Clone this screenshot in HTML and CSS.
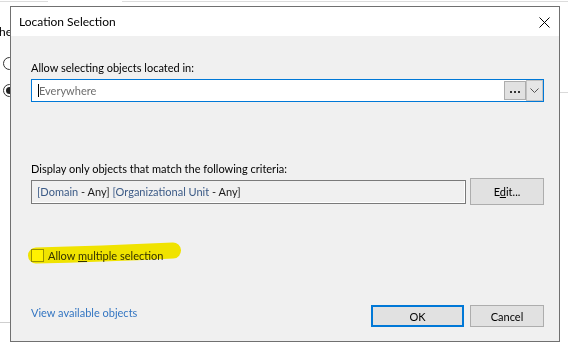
FILE: index.html
```html
<!DOCTYPE html>
<html>
<head>
<meta charset="utf-8">
<link rel="stylesheet" href="styles.css">
</head>
<body>
<div class="desk">
  <div class="topline"><span class="seg seg-a"></span><span class="seg seg-gap"></span><span class="seg seg-b"></span></div>
  <div class="bg-text">he</div>
  <div class="radio r1"></div>
  <div class="radio r2"><span class="dot"></span></div>
  <div class="rline"></div>
  <div class="bline"></div>
</div>

<div class="dialog">
  <div class="titlebar">
    <span class="title">Location Selection</span>
    <svg class="close" width="11" height="11" viewBox="0 0 11 11"><path d="M0.5 0.5 L10.5 10.5 M10.5 0.5 L0.5 10.5" stroke="#000" stroke-width="1" fill="none"/></svg>
  </div>
  <div class="body">
    <div class="label l1">Allow selecting objects located in:</div>
    <div class="combo">
      <div class="combo-text"><span class="caret"></span>Everywhere</div>
      <div class="dots"><svg width="10" height="3" viewBox="0 0 10 3"><rect x="0" y="0" width="2" height="2" fill="#333"/><rect x="4" y="0" width="2" height="2" fill="#333"/><rect x="8" y="0" width="2" height="2" fill="#333"/></svg></div>
      <div class="drop"><svg width="9" height="5" viewBox="0 0 9 5"><path d="M0.5 0.5 L4.5 4.5 L8.5 0.5" stroke="#555" stroke-width="1" fill="none"/></svg></div>
    </div>
    <div class="label l2">Display only objects that match the following criteria:</div>
    <div class="crit-row">
      <div class="crit"><span class="key">[Domain</span> - Any] <span class="key">[Organizational Unit</span> - Any]</div>
      <button class="btn edit">E<u>d</u>it...</button>
    </div>
    <div class="check-row"><span class="box"></span><span class="check-label">Allow <u>m</u>ultiple selection</span></div>
    <div class="bottom">
      <a class="link">View available objects</a>
      <div class="btns">
        <button class="btn ok">OK</button>
        <button class="btn cancel">Cancel</button>
      </div>
    </div>
  </div>
  <svg class="hl" width="548" height="334" viewBox="0 0 548 334"><path d="M25 248.5 Q89 247 162 243.5" stroke="#fff200" stroke-width="16" stroke-linecap="round" fill="none"/></svg>
</div>
</body>
</html>
```
FILE: styles.css
```css
* { box-sizing: border-box; }
html, body { margin: 0; padding: 0; }
body {
  width: 568px;
  height: 347px;
  overflow: hidden;
  background: #ffffff;
  font-family: "Lato", "Noto Sans", sans-serif;
  font-size: 11px;
  color: #000;
  position: relative;
}
.desk { position: absolute; inset: 0; }
.topline { display: flex; margin-top: 1px; height: 1px; }
.seg { display: block; height: 1px; }
.seg-a { width: 48px; background: #dcdcdc; }
.seg-gap { width: 74px; }
.seg-b { flex: 1; background: #dcdcdc; }
.bg-text { position: absolute; left: -1px; top: 24px; line-height: 16px; font-size: 12px; }
.radio { position: absolute; left: 3px; width: 13px; height: 13px; border: 1px solid #333; border-radius: 50%; background: #fff; display: flex; align-items: center; justify-content: center; }
.r1 { top: 57px; }
.r2 { top: 84px; }
.dot { width: 7px; height: 7px; border-radius: 50%; background: #222; }
.rline { position: absolute; left: 560px; top: 92px; width: 8px; height: 1px; background: #d9d9d9; }
.bline { position: absolute; left: 0; top: 322px; width: 10px; height: 1px; background: #cfcfcf; }

.dialog {
  position: absolute;
  left: 10px;
  top: 6px;
  width: 550px;
  height: 336px;
  border: 1px solid #707070;
  background: #f0f0f0;
  display: flex;
  flex-direction: column;
}
.titlebar {
  height: 29px;
  background: #fff;
  display: flex;
  align-items: center;
  justify-content: space-between;
  padding: 0 9px 0 8px;
  flex: 0 0 auto;
}
.title { line-height: 16px; font-size: 12px; }
.close { display: block; margin-top: 1px; }
.body {
  flex: 1;
  display: flex;
  flex-direction: column;
  padding: 24px 15px 14px 20px;
}
.label { line-height: 16px; height: 16px; white-space: nowrap; }
.l1 { margin-bottom: 3px; }
.combo {
  height: 23px;
  border: 1px solid #0078d7;
  background: #fff;
  display: flex;
  align-items: flex-start;
}
.combo-text {
  flex: 1;
  height: 21px;
  display: flex;
  align-items: center;
  padding-left: 6px;
  color: #6d6d6d;
}
.caret { display: block; width: 1px; height: 13px; background: #000; margin-right: 0; }
.dots {
  width: 22px;
  height: 19px;
  margin-top: 1px;
  border: 1px solid #adadad;
  background: #e1e1e1;
  display: flex;
  align-items: flex-end;
  justify-content: center;
  padding-bottom: 5px;
}
.dots svg { display: block; }
.drop {
  width: 17px;
  height: 21px;
  border: 1px solid #c2c2c2;
  background: #e6e6e6;
  display: flex;
  align-items: center;
  justify-content: center;
}
.drop svg { display: block; }
.l2 { margin-top: 59px; }
.crit-row {
  margin-top: 1px;
  height: 27px;
  display: flex;
  align-items: center;
  gap: 4px;
}
.crit {
  width: 435px;
  height: 24px;
  border: 1px solid #7a7a7a;
  box-shadow: inset -1px -1px 0 #ffffff;
  background: #f0f0f0;
  padding-left: 5px;
  line-height: 21px;
  color: #1a1a1a;
  white-space: nowrap;
}
.key { color: #3b5a86; }
.btn {
  font-family: inherit;
  font-size: 11px;
  color: #000;
  background: #e1e1e1;
  border: 1px solid #adadad;
  padding: 0;
  margin: 0;
  border-radius: 0;
}
.edit { width: 74px; height: 27px; }
.check-row {
  margin-top: 42px;
  height: 16px;
  display: flex;
  align-items: center;
  gap: 4px;
}
.box { width: 13px; height: 13px; border: 1px solid #9a9a9a; background: #fff; margin-top: 1px; }
.check-label { line-height: 16px; color: #333; margin-top: 1px; }
.bottom {
  margin-top: auto;
  height: 22px;
  display: flex;
  justify-content: space-between;
  align-items: flex-start;
}
.link { color: #3476c2; line-height: 16px; }
.btns { display: flex; gap: 6px; }
.ok { width: 93px; height: 22px; border: 2px solid #0078d7; }
.cancel { width: 74px; height: 22px; }
.hl {
  position: absolute;
  left: 0;
  top: 0;
  pointer-events: none;
  mix-blend-mode: multiply;
}
```
